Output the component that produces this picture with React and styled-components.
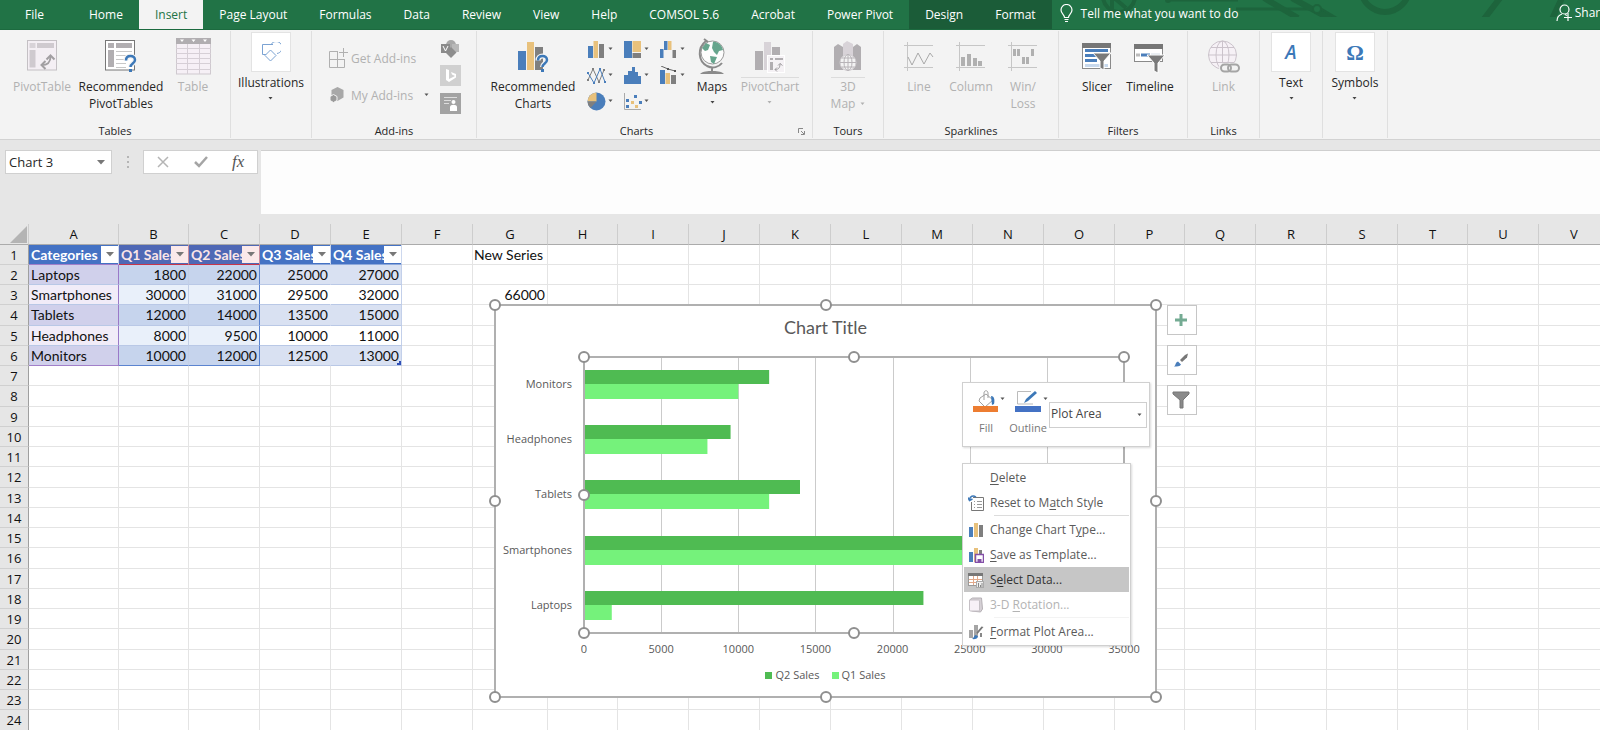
import styled, { createGlobalStyle } from "styled-components";

const uiFont = `"Open Sans", "Noto Sans", sans-serif`;
const cellFont = `Lato, "Open Sans", sans-serif`;

const GlobalStyle = createGlobalStyle`
    * {
        box-sizing: border-box;
    }
    body {
        margin: 0;
        font-family: ${uiFont};
        font-size: 12px;
        color: #262626;
    }
    button, input, textarea, select {
        font: inherit;
        color: inherit;
        background: none;
        border: 0;
        padding: 0;
        margin: 0;
    }
    svg {
        display: block;
        flex: none;
    }
`;

const StyledApp = styled.div`
    display: flex;
    flex-direction: column;
    height: 100vh;
    overflow: hidden;
    background: #e6e6e6;
`;

export default function App(){
    return (
        <StyledApp>
            <GlobalStyle />
            <TabBar />
            <Ribbon />
            <FormulaBar />
            <Sheet />
        </StyledApp>
    );
}

/* ---------- icons ---------- */

const blue = "#4a7ebb";
const sand = "#e8c17c";
const gray = "#7f7f7f";
const pale = "#b1aeb1";
const paler = "#d8d3d8";

function Icon({ w, h, children }){
    return <svg width={w} height={h} viewBox={`0 0 ${w} ${h}`} fill="none" aria-hidden="true">{children}</svg>;
}

function Caret({ color = "#555" }){
    return <Icon w={5} h={4}><path d="M0.5 0.5h4L2.5 3z" fill={color} /></Icon>;
}

function PivotTableIcon(){
    return (
        <Icon w={32} h={36}>
            <rect x="1.5" y="2.5" width="29" height="29.5" fill="#f4eff4" stroke="#c4c0c4" />
            <rect x="3.5" y="5" width="6" height="5" fill={paler} />
            <rect x="11" y="5" width="17" height="5" fill="#cfcacf" />
            <rect x="3.5" y="12" width="6" height="17.5" fill="#cfcacf" />
            <path d="M15.5 27c6 0 9-2 9-9" stroke="#a29fa2" strokeWidth="2" />
            <path d="M19.5 23l-4 4 4 4M20.500 21.500l4-4 4 4" stroke="#a29fa2" strokeWidth="2" />
        </Icon>
    );
}

function Question(){
    return (
        <g>
            <path d="M22 22.5c0-3 2-4.500 4.500-4.500s4.500 1.500 4.500 4c0 3.500-4.500 3.500-4.500 7" stroke="#f3f3f3" strokeWidth="5" />
            <path d="M22 22.500c0-3 2-4.500 4.500-4.500s4.500 1.500 4.500 4c0 3.500-4.500 3.500-4.500 7" stroke="#3c78b8" strokeWidth="2.500" />
            <rect x="25" y="31" width="3" height="3" fill="#3c78b8" />
        </g>
    );
}

function RecommendedPivotIcon(){
    return (
        <Icon w={34} h={36}>
            <rect x="1.500" y="2.500" width="29" height="29.500" fill="#fff" stroke="#777" />
            <rect x="4" y="5" width="6" height="5" fill={pale} />
            <rect x="12" y="5" width="16" height="5" fill={pale} />
            <rect x="4" y="12" width="6" height="17" fill={pale} />
            <path d="M12 13.500h16M12 17.500h16M12 21.500h10M12 25.500h10M12 29.500h10" stroke="#c8c8c8" />
            <Question />
        </Icon>
    );
}

function TableIcon(){
    return (
        <Icon w={35} h={37}>
            <rect x="0.500" y="0.500" width="34" height="35.500" fill="#f6f0f6" stroke="#cfc9cf" />
            <rect width="35" height="6" fill={pale} />
            <path d="M4 1.500h4l-2 2.500zM15.500 1.500h4l-2 2.500zM27 1.500h4l-2 2.500z" fill="#fff" />
            <path d="M0 10.500h35M0 15.500h35M0 20.500h35M0 25.500h35M0 31.500h35M11.500 6v30M23.500 6v30" stroke="#d6cfd6" />
        </Icon>
    );
}

function ShapesIcon(){
    return (
        <Icon w={20} h={20}>
            <path d="M6 12.500H1.500v-10H12" stroke="#7ba3d3" />
            <path d="M10 2.500a6 6 0 1 1 6 9" stroke="#7ba3d3" />
            <path d="M9.500 8l5.500 5.500-5.500 5.500L4 13.500z" fill="#fff" stroke="#7ba3d3" />
        </Icon>
    );
}

function GetAddinsIcon(){
    return (
        <Icon w={19} h={20}>
            <path d="M9 3.500H0.500v16h15V11M0.500 11.500h15M8.500 3.500v16M14.500 0v9M10 4.500h9" stroke="#b0b0b0" />
        </Icon>
    );
}

function MyAddinsIcon(){
    return (
        <Icon w={19} h={16}>
            <path d="M8.500 0l6 3v7.500l-6 3.500-6-3.500V3z" fill="#a8a8a8" />
            <path d="M4.500 7.500l3.500 2v4l-3.500 2-3.500-2v-4z" fill="#9a9a9a" stroke="#f3f3f3" />
        </Icon>
    );
}

function VisioIcon(){
    return (
        <Icon w={21} h={18}>
            <circle cx="11" cy="5" r="5" fill="#a8a8a8" />
            <rect x="12" y="4" width="7" height="8" fill="#b8b8b8" />
            <path d="M11 7l5.500 5.500L11 18l-5.500-5.500z" fill="#8d8d8d" />
            <rect x="1" y="4" width="9" height="9" fill="#8a8a8a" />
            <path d="M3 6l2.500 5L8 6" stroke="#fff" />
        </Icon>
    );
}

function BingIcon(){
    return (
        <Icon w={21} h={21}>
            <rect width="21" height="21" fill="#d0d0d0" />
            <path d="M6 4l3 1v9l6-3-3-1.500L11 7l5 2v3.500L9 17l-3-2z" fill="#fff" />
        </Icon>
    );
}

function PeopleIcon(){
    return (
        <Icon w={21} h={21}>
            <rect width="21" height="21" fill="#a3a3a3" />
            <path d="M4 4.500h13M4 7.500h7M4 10.500h5" stroke="#ddd" />
            <circle cx="13.500" cy="9" r="2" fill="#fff" />
            <path d="M10 18v-4c0-3 7-3 7 0v4z" fill="#fff" />
        </Icon>
    );
}

function RecommendedChartsIcon(){
    return (
        <Icon w={34} h={36}>
            <rect x="2" y="13" width="8" height="19" fill={blue} />
            <rect x="11" y="4" width="7" height="28" fill={sand} />
            <rect x="19" y="9" width="8" height="23" fill={gray} />
            <Question />
        </Icon>
    );
}

const miniCharts = [
    { name: "Column chart", art: <><path d="M1 6h5v12H1z" fill={blue} /><path d="M6.500 1H11v17H6.500z" fill={sand} /><path d="M12 4h5v14h-5z" fill={gray} /></> },
    { name: "Hierarchy chart", art: <><path d="M1 1h8v17H1z" fill={blue} /><path d="M9.500 1H18v11H9.500z" fill={sand} /><path d="M9.500 13H18v5H9.500z" fill={gray} /></> },
    { name: "Waterfall chart", art: <><path d="M1 9h3.500v9H1zM5 1h3.500v9H5z" fill={blue} /><path d="M9 1h3.500v9H9z" fill={sand} /><path d="M13.500 10H17v8h-3.500z" fill={gray} /></> },
    { name: "Line chart", art: <><path d="M1 14l5-11 6 13 5-12" stroke={gray} /><path d="M1 7l6 10 6-14 5 13" stroke={blue} /><path d="M0 6h2v2H0zM6 16h2v2H6zM12 2h2v2h-2zM17 15h2v2h-2z" fill={blue} /><path d="M0 13h2v2H0zM5 2h2v2H5zM11 15h2v2h-2zM16 3h2v2h-2z" fill={gray} /></> },
    { name: "Statistic chart", art: <path d="M1 9h4V5h4V1h3v5h3v4h3v8H1z" fill={blue} /> },
    { name: "Combo chart", art: <><path d="M1 4h5v14H1z" fill={blue} /><path d="M6.500 7H11v11H6.500z" fill={sand} /><path d="M12 9h5v9h-5z" fill={gray} /><path d="M2 0l7 3 7 2" stroke="#666" /><path d="M8 2h2v2H8zM15 4h2v2h-2z" fill="#555" /></> },
    { name: "Pie chart", art: <><circle cx="9.500" cy="9.500" r="9" fill={blue} /><path d="M9.500 9.500V0.500a9 9 0 0 0-9 9z" fill={sand} /><path d="M9.500 9.500h-9a9 9 0 0 0 3 6.500z" fill={gray} /></> },
    { name: "Scatter chart", art: <><path d="M1.500 1v16.500H18" stroke="#aaa" /><path d="M11 3h3v3h-3zM3 7h3v3H3zM3 13h3v3H3zM16 9h3v3h-3z" fill={blue} /><path d="M8 9h3v3H8zM12 13h3v3h-3z" fill={sand} /></> },
];

function MapsIcon(){
    return (
        <Icon w={28} h={37}>
            <circle cx="14.500" cy="14.500" r="11.500" fill="#fdfdfd" stroke="#999" />
            <path d="M15 4c4-1 9 3 10 8l-4 1-2 4-3-3-2-4z" fill="#66a58d" />
            <path d="M4 10l4-5 4 2-2 5-3 1zM12 18l7 1-3 7-3-2z" fill="#66a58d" />
            <path d="M6 1l4 3M8 3C-1 10 0 23 9 28c6 3 12 1 15-3M14 29v5" stroke="#8a8a8a" strokeWidth="2" />
            <path d="M2 36c3-3 8-3 12-3s9 0 12 3z" fill="#8a8a8a" />
        </Icon>
    );
}

function PivotChartIcon(){
    return (
        <Icon w={34} h={36}>
            <rect x="2" y="13" width="8" height="19" fill={pale} />
            <rect x="11" y="4" width="7" height="28" fill={paler} />
            <rect x="19" y="9" width="8" height="23" fill={pale} />
            <rect x="14.500" y="17.500" width="17" height="17" fill="#f5f2f5" stroke="#fff" />
            <path d="M17 20h3v2h-3zM22 20h8v2h-8zM17 24h3v8h-3z" fill={pale} />
            <path d="M22 31.500c4 0 5-2 5-6M22 31.500l2-2M22 31.500l2 2M27 25.500l-2 2M27 25.500l2.500 2" stroke="#a09da0" />
        </Icon>
    );
}

function MapTourIcon(){
    return (
        <Icon w={30} h={36}>
            <path d="M1 9l4-3 5 3v23L1 32z" fill={pale} />
            <path d="M10 6l4-3 6 3v26H10z" fill={paler} />
            <path d="M20 9l4-3 4 3v23h-8z" fill={pale} />
            <circle cx="15" cy="24.500" r="8" fill="#f3f3f3" stroke="#d0ccd0" />
            <path d="M7 24.500h16M9 20h12M9 29h12M15 16.500v16" stroke="#b8b4b8" />
            <ellipse cx="15" cy="24.500" rx="4" ry="8" stroke="#b8b4b8" />
        </Icon>
    );
}

function SparkIcon({ kind }){
    return (
        <Icon w={30} h={36}>
            <path d="M0 7.500h29M0 29.500h29M3.500 4v29" stroke="#c6c6c6" />
            {kind === "line" && <path d="M4 19l4 8 6-12 6 11 6-11 3 4" stroke="#a8a8a8" />}
            {kind === "column" && <path d="M5 19h4v9H5zM11 16h4v12h-4zM17 20h4v8h-4zM22 23h4v5h-4z" fill="#b0b0b0" />}
            {kind === "winloss" && <path d="M5 11h3v7H5zM9 11h3v7H9zM14 19h3v7h-3zM18 19h3v7h-3zM23 11h3v7h-3z" fill="#b0b0b0" />}
        </Icon>
    );
}

function SlicerIcon(){
    return (
        <Icon w={30} h={36}>
            <rect x="0.500" y="5.500" width="28" height="25" fill="#fff" stroke="#8a8a8a" />
            <rect y="5" width="29" height="5" fill="#767676" />
            <path d="M3 12.500h23M3 17.500h14M3 22.500h12" stroke={blue} strokeWidth="3" />
            <path d="M3 27.500h23" stroke="#c7d8ec" strokeWidth="3" />
            <path d="M11 15h18l-7 8v9l-4-2v-7z" fill="#7a7a7a" stroke="#fff" />
        </Icon>
    );
}

function TimelineIcon(){
    return (
        <Icon w={32} h={36}>
            <rect x="0.500" y="6.500" width="28" height="17" fill="#fff" stroke="#8a8a8a" />
            <rect y="6" width="29" height="5" fill="#767676" />
            <path d="M2 17h4" stroke="#bbb" strokeWidth="3" />
            <path d="M7 17h9" stroke={blue} strokeWidth="3" />
            <path d="M17 17h9" stroke="#d5dde6" strokeWidth="3" />
            <path d="M13 17h18l-7 8v10l-4-2v-8z" fill="#7a7a7a" stroke="#fff" />
        </Icon>
    );
}

function LinkIcon(){
    return (
        <Icon w={34} h={36}>
            <g stroke="#cbc3cb">
                <circle cx="15.500" cy="17" r="14" fill="#f6f1f6" />
                <ellipse cx="15.500" cy="17" rx="6.500" ry="14" />
                <path d="M15.500 3v28M1.500 17h28M4 9.500h23M4 24.500h23" />
            </g>
            <rect x="12" y="25" width="22" height="10" rx="5" fill="#f3f3f3" />
            <g stroke="#a5a5a5" strokeWidth="2">
                <rect x="14" y="26.500" width="10" height="7" rx="3.500" />
                <rect x="21" y="26.500" width="11" height="7" rx="3.500" />
            </g>
        </Icon>
    );
}

/* ---------- tabs ---------- */

const StyledTabBar = styled.nav`
    position: relative;
    display: flex;
    flex: none;
    height: 30px;
    overflow: hidden;
    background: #217346;
    color: #fff;
    border-bottom: 1px solid #1c6a3f;

    .circuit {
        position: absolute;
        right: 0;
        top: 0;
    }
`;

const Tab = styled.button`
    flex: none;
    height: 30px;
    padding: 0 16px 2px;
    white-space: nowrap;
    background: ${(p) => (p.$active ? "#f3f3f3" : p.$context ? "#1b5c38" : "transparent")};
    color: ${(p) => (p.$active ? "#217346" : "#fff")};

    &:first-of-type {
        padding: 0 29px 2px 25px;
    }
`;

const TellMe = styled.button`
    position: relative;
    display: flex;
    align-items: center;
    gap: 8px;
    flex: 1;
    padding: 0 0 2px 8px;
    white-space: nowrap;
`;

const Share = styled.button`
    position: relative;
    display: flex;
    align-items: center;
    gap: 3px;
    padding-bottom: 4px;
    margin-right: -7px;
`;

const tabs = ["File", "Home", "Insert", "Page Layout", "Formulas", "Data", "Review", "View", "Help", "COMSOL 5.6", "Acrobat", "Power Pivot"];

function TabBar(){
    return (
        <StyledTabBar>
            <svg className="circuit" width="500" height="17" viewBox="0 0 500 17" fill="none" stroke="#1d643c" strokeWidth="4" aria-hidden="true">
                <circle cx="19" cy="-4" r="16" />
                <path d="M12 10V-4L26 8" />
                <circle cx="68" cy="0" r="3" fill="#1d643c" stroke="none" />
                <path d="M68 0h70M136 9h75M221 9l20 12" strokeWidth="3" />
                <path d="M164-2l34 20M192-2l40 22" strokeWidth="6" />
                <circle cx="217" cy="9" r="4" strokeWidth="2" fill="#217346" />
                <circle cx="285" cy="-12" r="24" strokeWidth="6" />
                <path d="M400-2l-16 21M462-2l-10 21" strokeWidth="6" />
            </svg>
            {tabs.map((name) => <Tab key={name} $active={name === "Insert"}>{name}</Tab>)}
            <Tab $context>Design</Tab>
            <Tab $context>Format</Tab>
            <TellMe>
                <Icon w={13} h={19}>
                    <path d="M4.500 13.500c0-3-3.500-4-3.500-7.500a5.500 5.500 0 0 1 11 0c0 3.500-3.500 4.500-3.500 7.500zM4.500 15.500h4M5 17.500h3" stroke="#fff" strokeWidth="1.200" />
                </Icon>
                Tell me what you want to do
            </TellMe>
            <Share>
                <Icon w={16} h={18}>
                    <circle cx="8.500" cy="5.500" r="4.500" stroke="#fff" strokeWidth="1.200" />
                    <path d="M1 17c0-4 2-6 5-7M9 10.500l2 1M12 9v8M8 13.500h8" stroke="#fff" strokeWidth="1.200" />
                </Icon>
                Share
            </Share>
        </StyledTabBar>
    );
}

/* ---------- ribbon ---------- */

const StyledRibbon = styled.div`
    display: flex;
    flex: none;
    height: 110px;
    background: #f3f3f3;
    border-bottom: 1px solid #d2d2d2;
    overflow: hidden;
`;

const StyledGroup = styled.section`
    display: flex;
    flex-direction: column;
    flex: none;
    width: ${(p) => p.$width}px;
    margin: 1px 0;
    border-right: 1px solid #dfdfdf;

    .body {
        display: flex;
        flex: 1;
        padding-left: ${(p) => p.$inset || 0}px;
    }
    .label {
        display: flex;
        justify-content: center;
        position: relative;
        height: 17px;
        padding-right: ${(p) => (p.$launcher ? 16 : 0)}px;
        line-height: 19px;
        font-size: 11px;
    }
    .launcher {
        position: absolute;
        right: 7px;
        top: 7px;
    }
`;

const BigButton = styled.button`
    display: flex;
    flex-direction: column;
    align-items: center;
    flex: none;
    width: ${(p) => (p.$width ? `${p.$width}px` : "100%")};
    padding-top: ${(p) => (p.$tile ? 1 : 7)}px;
    line-height: 17px;
    white-space: nowrap;
    color: ${(p) => (p.$off ? "#b1b1b1" : "#262626")};

    .art {
        display: flex;
        align-items: center;
        justify-content: center;
        height: ${(p) => (p.$tile ? 40 : 36)}px;
        min-width: ${(p) => (p.$tile ? 40 : 0)}px;
        margin-bottom: ${(p) => (p.$tile ? 2 : 4)}px;
        background: ${(p) => (p.$tile ? "#fff" : "none")};
        border: ${(p) => (p.$tile ? "1px solid #e3e3e3" : "0")};
        color: #3c78b8;
    }
    .words {
        border-top: 1px solid ${(p) => (p.$ruled ? "#dcdcdc" : "transparent")};
        margin-top: -1px;
    }
    .line {
        display: flex;
        align-items: center;
        justify-content: center;
        gap: 5px;
    }
    .glyph {
        font-family: "Liberation Serif", serif;
        font-weight: bold;
        font-size: 22px;
    }
    .slant {
        font-family: ${uiFont};
        font-style: italic;
        font-weight: 600;
        font-size: 19px;
    }
`;

const AddinsList = styled.div`
    display: flex;
    flex-direction: column;
    gap: 17px;
    width: 111px;
    padding-top: 17px;
    color: #b1b1b1;

    button {
        display: flex;
        align-items: center;
        gap: 3px;
        height: 20px;
        white-space: nowrap;
    }
    button svg:last-child {
        margin-left: 8px;
    }
`;

const IconStack = styled.div`
    display: flex;
    flex-direction: column;
    gap: 7px;
    padding-top: 9px;
`;

const ChartGrid = styled.div`
    display: grid;
    grid-template-columns: repeat(3, 36px);
    grid-auto-rows: 26px;
    margin-left: 8px;
    padding-top: 5px;

    button {
        display: flex;
        align-items: center;
        gap: 2px;
    }
`;

function Group({ name, width, inset, launcher, children }){
    return (
        <StyledGroup $width={width} $inset={inset} $launcher={launcher}>
            <div className="body">{children}</div>
            <div className="label">
                {name}
                {launcher && (
                    <button className="launcher" aria-label="See all charts">
                        <Icon w={7} h={7}><path d="M0.500 5V0.500H5M3 3l3 3M6.500 3v3.500H3" stroke="#888" /></Icon>
                    </button>
                )}
            </div>
        </StyledGroup>
    );
}

function Big({ icon, lines, caret, ...rest }){
    return (
        <BigButton {...rest}>
            <span className="art">{icon}</span>
            <span className="words">
                {lines.map((line, i) => (
                    <span className="line" key={line}>
                        {line}
                        {caret === "inline" && i === lines.length - 1 && <Caret color="#b1b1b1" />}
                    </span>
                ))}
                {caret === "below" && <span className="line"><Icon w={5} h={14}><path d="M0.500 6h4L2.500 8.500z" fill={rest.$off ? "#b1b1b1" : "#444"} /></Icon></span>}
            </span>
        </BigButton>
    );
}

function Ribbon(){
    return (
        <StyledRibbon>
            <Group name="Tables" width={231} inset={4}>
                <Big icon={<PivotTableIcon />} lines={["PivotTable"]} $width={76} $off />
                <Big icon={<RecommendedPivotIcon />} lines={["Recommended", "PivotTables"]} $width={82} />
                <Big icon={<TableIcon />} lines={["Table"]} $width={62} $off />
            </Group>
            <Group width={81}>
                <Big icon={<ShapesIcon />} lines={["Illustrations"]} caret="below" $tile />
            </Group>
            <Group name="Add-ins" width={165} inset={17}>
                <AddinsList>
                    <button><GetAddinsIcon /><span>Get Add-ins</span></button>
                    <button><MyAddinsIcon /><span>My Add-ins</span><Caret /></button>
                </AddinsList>
                <IconStack>
                    <VisioIcon />
                    <BingIcon />
                    <PeopleIcon />
                </IconStack>
            </Group>
            <Group name="Charts" width={336} inset={10} launcher>
                <Big icon={<RecommendedChartsIcon />} lines={["Recommended", "Charts"]} $width={92} />
                <ChartGrid>
                    {miniCharts.map((c) => (
                        <button key={c.name} aria-label={c.name}><Icon w={19} h={19}>{c.art}</Icon><Caret /></button>
                    ))}
                </ChartGrid>
                <Big icon={<MapsIcon />} lines={["Maps"]} caret="below" $width={34} />
                <Big icon={<PivotChartIcon />} lines={["PivotChart"]} caret="below" $width={82} $off $ruled />
            </Group>
            <Group name="Tours" width={71}>
                <Big icon={<MapTourIcon />} lines={["3D", "Map"]} caret="inline" $off $ruled />
            </Group>
            <Group name="Sparklines" width={175} inset={9}>
                <Big icon={<SparkIcon kind="line" />} lines={["Line"]} $width={52} $off />
                <Big icon={<SparkIcon kind="column" />} lines={["Column"]} $width={52} $off />
                <Big icon={<SparkIcon kind="winloss" />} lines={["Win/", "Loss"]} $width={52} $off />
            </Group>
            <Group name="Filters" width={129} inset={12}>
                <Big icon={<SlicerIcon />} lines={["Slicer"]} $width={52} />
                <Big icon={<TimelineIcon />} lines={["Timeline"]} $width={54} />
            </Group>
            <Group name="Links" width={72}>
                <Big icon={<LinkIcon />} lines={["Link"]} $off />
            </Group>
            <Group width={63}>
                <Big icon={<span className="glyph slant">A</span>} lines={["Text"]} caret="below" $tile />
            </Group>
            <Group width={65}>
                <Big icon={<span className="glyph">Ω</span>} lines={["Symbols"]} caret="below" $tile />
            </Group>
        </StyledRibbon>
    );
}

/* ---------- formula bar ---------- */

const StyledFormulaBar = styled.div`
    display: flex;
    flex: none;
    align-items: flex-start;
    height: 84px;
    padding: 10px 0 0 5px;

    textarea {
        flex: 1;
        height: 64px;
        margin-left: 3px;
        background: #fdfdfd;
        border-top: 1px solid #cfcfcf;
        resize: none;
    }
`;

const NameBox = styled.div`
    display: flex;
    align-items: center;
    width: 107px;
    height: 24px;
    padding: 0 6px 0 3px;
    background: #fff;
    border: 1px solid #d0d0d0;

    input {
        flex: 1;
        min-width: 0;
        font-size: 13px;
    }
`;

const Grip = styled.span`
    display: flex;
    justify-content: center;
    align-items: center;
    width: 31px;
    height: 24px;
`;

const EditButtons = styled.div`
    display: flex;
    width: 115px;
    height: 24px;
    background: #fff;
    border: 1px solid #d0d0d0;

    button {
        display: flex;
        align-items: center;
        justify-content: center;
        flex: 1;
        font: italic 17px "Liberation Serif", serif;
        color: #555;
    }
`;

function FormulaBar(){
    return (
        <StyledFormulaBar>
            <NameBox>
                <input aria-label="Name box" defaultValue="Chart 3" />
                <button aria-label="Open name list"><Icon w={8} h={5}><path d="M0 0h8L4 4.500z" fill="#777" /></Icon></button>
            </NameBox>
            <Grip><Icon w={2} h={12}><path d="M0 0h2v2H0zM0 5h2v2H0zM0 10h2v2H0z" fill="#b5b5b5" /></Icon></Grip>
            <EditButtons>
                <button aria-label="Cancel"><Icon w={12} h={12}><path d="M1 1l10 10M11 1L1 11" stroke="#b5b5b5" strokeWidth="1.500" /></Icon></button>
                <button aria-label="Enter"><Icon w={14} h={12}><path d="M1 6l4 4 8-9" stroke="#a5a5a5" strokeWidth="2.500" /></Icon></button>
                <button aria-label="Insert function">fx</button>
            </EditButtons>
            <textarea aria-label="Formula" />
        </StyledFormulaBar>
    );
}

/* ---------- sheet ---------- */

const columns = "ABCDEFGHIJKLMNOPQRSTUV".split("");
const columnWidths = { A: 90, B: 70, G: 75, H: 70, P: 70, T: 70 };
const rowNumbers = Array.from({ length: 24 }, (_, i) => i + 1);

const headers = ["Categories", "Q1 Sales", "Q2 Sales", "Q3 Sales", "Q4 Sales"];
const sales = [
    ["Laptops", 1800, 22000, 25000, 27000],
    ["Smartphones", 30000, 31000, 29500, 32000],
    ["Tablets", 12000, 14000, 13500, 15000],
    ["Headphones", 8000, 9500, 10000, 11000],
    ["Monitors", 10000, 12000, 12500, 13000],
];

const StyledSheet = styled.main`
    position: relative;
    flex: 1;
    min-height: 0;
    overflow: hidden;
    background: #fff;
`;

const Grid = styled.table`
    table-layout: fixed;
    border-spacing: 0;
    width: 0;
    font-family: ${cellFont};
    font-size: 14px;
    line-height: 18px;
    color: #111;

    th, td {
        padding: 0;
        overflow: hidden;
        white-space: nowrap;
        border-right: 1px solid #e4e4e4;
        border-bottom: 1px solid #e4e4e4;
    }
    thead th {
        height: 21px;
        background: #e6e6e6;
        font-family: ${uiFont};
        font-size: 13px;
        font-weight: normal;
        border-right-color: #cdcdcd;
        border-bottom-color: #ababab;
    }
    tbody th {
        background: #e6e6e6;
        font-family: ${uiFont};
        font-size: 13px;
        font-weight: normal;
        border-right-color: #9f9f9f;
        border-bottom-color: #d0d0d0;
    }
    thead th:first-child svg {
        margin-left: 10px;
    }
`;

const Row = styled.tr`
    height: ${(p) => (p.$tall ? 21 : 20)}px;
`;

const tint = {
    name: ["#d0d0eb", "#f1ecf8"],
    picked: ["#c6d4ed", "#e9f0fa"],
    plain: ["#d9e1f2", "#fff"],
};

const Cell = styled.td`
    && {
        position: relative;
        background: ${(p) => tint[p.$tint][p.$band ? 0 : 1]};
        text-align: ${(p) => (p.$tint === "name" ? "left" : "right")};
        padding: 0 2px;
        border-bottom-color: ${(p) => (p.$last && p.$tint === "name" ? "#a17fc9" : p.$last && p.$tint === "picked" ? "#5b84d0" : "#b9c8e6")};
        border-right-color: ${(p) => p.$edge || "transparent"};
    }
`;

const HeadCell = styled.td`
    && {
        background: ${(p) => (p.$picked ? "#4f68b5" : "#4472c4")};
        border-bottom-color: ${(p) => (p.$picked ? "#c8354a" : p.$name ? "#a17fc9" : "#8ea9db")};
        border-right-color: ${(p) => (p.$picked ? "#c98d9c" : "#cdd8ee")};
    }
    div {
        display: flex;
        align-items: center;
        height: 19px;
        padding-left: 2px;
    }
    span {
        flex: 1;
        overflow: hidden;
        font-weight: bold;
        color: ${(p) => (p.$picked ? "#fbe5e8" : "#fff")};
    }
    button {
        display: flex;
        align-items: center;
        justify-content: center;
        flex: none;
        width: 17px;
        height: 17px;
        background: ${(p) => (p.$picked ? "#fbe9ea" : "#fff")};
    }
`;

const TableCorner = styled.i`
    position: absolute;
    right: 0;
    bottom: 0;
    width: 4px;
    height: 4px;
    border-right: 2px solid #2f4fb5;
    border-bottom: 2px solid #2f4fb5;
`;

const NumberCell = styled.td`
    && {
        text-align: right;
        padding-right: 2px;
    }
`;

const TextCell = styled.td`
    && {
        padding-left: 1px;
    }
`;

function SheetCell({ row, col }){
    const index = columns.indexOf(col);
    if (row === 1 && index < 5) {
        return (
            <HeadCell $picked={col === "B" || col === "C"} $name={col === "A"}>
                <div>
                    <span>{headers[index]}</span>
                    <button aria-label={`Filter ${headers[index]}`}><Icon w={8} h={5}><path d="M0 0h8L4 4.500z" fill="#777" /></Icon></button>
                </div>
            </HeadCell>
        );
    }
    if (row > 1 && row < 7 && index < 5) {
        return (
            <Cell
                $tint={col === "A" ? "name" : col < "D" ? "picked" : "plain"}
                $band={row % 2 === 0}
                $last={row === 6}
                $edge={{ A: "#9a78c8", B: "#c3cfe6", C: "#5b84d0", E: "#c3d0ea" }[col]}
            >
                {sales[row - 2][index]}
                {row === 6 && col === "E" && <TableCorner />}
            </Cell>
        );
    }
    if (col === "G" && row === 1) return <TextCell>New Series</TextCell>;
    if (col === "G" && row === 3) return <NumberCell>66000</NumberCell>;
    return <td />;
}

function Sheet(){
    return (
        <StyledSheet>
            <Grid>
                <colgroup>
                    <col width={29} />
                    {columns.map((c) => <col key={c} width={columnWidths[c] || 71} />)}
                </colgroup>
                <thead>
                    <tr>
                        <th aria-label="Select all"><Icon w={17} h={17}><path d="M17 0v17H0z" fill="#b4b4b4" /></Icon></th>
                        {columns.map((c) => <th key={c} scope="col">{c}</th>)}
                    </tr>
                </thead>
                <tbody>
                    {rowNumbers.map((n) => (
                        <Row key={n} $tall={n % 4 === 0}>
                            <th scope="row">{n}</th>
                            {columns.map((c) => <SheetCell key={c} row={n} col={c} />)}
                        </Row>
                    ))}
                </tbody>
            </Grid>
            <Chart />
            <ChartTools />
            <MiniToolbar />
            <ContextMenu />
        </StyledSheet>
    );
}

/* ---------- chart ---------- */

const StyledChart = styled.figure`
    position: absolute;
    left: 494px;
    top: 80px;
    display: flex;
    flex-direction: column;
    width: 663px;
    height: 394px;
    margin: 0;
    background: #fff;
    border: 2px solid #b0b0b0;
    font-size: 11px;
    color: #595959;

    h2 {
        margin: 9px 0 2px;
        text-align: center;
        font-family: ${cellFont};
        font-size: 18px;
        line-height: 24px;
        font-weight: normal;
    }
    text {
        font-size: 11px;
        fill: #595959;
    }
`;

const Legend = styled.figcaption`
    display: flex;
    justify-content: center;
    gap: 12px;
    margin-top: 12px;
    line-height: 16px;

    span {
        display: flex;
        align-items: center;
        gap: 3px;
    }
`;

const Swatch = styled.i`
    width: 7px;
    height: 7px;
    background: ${(p) => p.$color};
`;

/* centred on the middle of the 2px frame line */
const Handle = styled.i`
    position: absolute;
    left: calc((100% + 2px) * ${(p) => p.$x / 100} - 1px);
    top: calc((100% + 2px) * ${(p) => p.$y / 100} - 1px);
    width: 12px;
    height: 12px;
    margin: -6px;
    background: #fff;
    border: 2px solid #8f8f8f;
    border-radius: 50%;
`;

const handleSpots = [[0, 0], [50, 0], [100, 0], [0, 50], [100, 50], [0, 100], [50, 100], [100, 100]];
const dark = "#4fbb52";
const light = "#75f27b";

function Plot(){
    const left = 88;
    const top = 16;
    const width = 540;
    const height = 276;
    const band = height / 5;
    const scale = (v) => (v / 35000) * width;
    const ticks = [0, 5000, 10000, 15000, 20000, 25000, 30000, 35000];
    const rows = [...sales].reverse();
    return (
        <svg width="659" height="314" viewBox="0 0 659 314" role="img" aria-label="Sales by category">
            {ticks.map((t) => (
                <g key={t}>
                    <rect x={Math.round(left + scale(t))} y={top} width="1" height={height} fill="#cbcbcb" />
                    <text x={left + scale(t)} y={top + height + 20} textAnchor="middle">{t}</text>
                </g>
            ))}
            {rows.map(([name, q1, q2], i) => (
                <g key={name}>
                    <rect x={left} y={Math.round(top + 13 + i * band)} width={scale(q2)} height="14" fill={dark} />
                    <rect x={left} y={Math.round(top + 27 + i * band)} width={scale(q1)} height="15" fill={light} />
                    <text x={left - 12} y={Math.round(top + 31 + i * band)} textAnchor="end">{name}</text>
                </g>
            ))}
            <rect x={left} y={top} width={width} height={height} fill="none" stroke="#b0b0b0" strokeWidth="2" />
            {handleSpots.filter(([x, y]) => !(x === 100 && y === 50)).map(([x, y]) => (
                <circle key={`${x}-${y}`} cx={left + (width * x) / 100} cy={top + (height * y) / 100} r="5" fill="#fff" stroke="#8f8f8f" strokeWidth="2" />
            ))}
        </svg>
    );
}

function Chart(){
    return (
        <StyledChart>
            <h2>Chart Title</h2>
            <Plot />
            <Legend>
                <span><Swatch $color={dark} />Q2 Sales</span>
                <span><Swatch $color={light} />Q1 Sales</span>
            </Legend>
            {handleSpots.map(([x, y]) => <Handle key={`${x}-${y}`} $x={x} $y={y} />)}
        </StyledChart>
    );
}

const StyledChartTools = styled.div`
    position: absolute;
    left: 1167px;
    top: 81px;
    display: flex;
    flex-direction: column;
    gap: 10px;

    button {
        display: flex;
        align-items: center;
        justify-content: center;
        width: 30px;
        height: 30px;
        padding: 0 2px 1px 0;
        background: #fff;
        border: 1px solid #c6c6c6;
    }
`;

function ChartTools(){
    return (
        <StyledChartTools>
            <button aria-label="Chart elements"><Icon w={12} h={12}><path d="M6 0v12M0 6h12" stroke="#74ab93" strokeWidth="3" /></Icon></button>
            <button aria-label="Chart styles">
                <Icon w={16} h={14}>
                    <path d="M15 0.500l-1 4-5 4.500-2-2 5-5z" fill="#777" />
                    <path d="M1 13.500c2-1 1-4 4-5l3 3c-1 2-4 2-7 2z" fill={blue} />
                </Icon>
            </button>
            <button aria-label="Chart filters"><Icon w={18} h={18}><path d="M1 1h16v2l-6 6v8H8V9L1 3z" fill="#8a8a8a" stroke="#777" /></Icon></button>
        </StyledChartTools>
    );
}

/* ---------- popups ---------- */

const Popup = styled.div`
    position: absolute;
    left: 962px;
    background: #fff;
    border: 1px solid #d0d0d0;
    box-shadow: 1px 1px 2px rgba(0, 0, 0, 0.15);
    color: #555;
`;

const StyledMiniToolbar = styled(Popup)`
    top: 158px;
    display: flex;
    width: 188px;
    height: 65px;
    padding: 7px 2px 0 2px;
`;

const ColorButton = styled.button`
    display: flex;
    flex-direction: column;
    align-items: center;
    width: 42px;
    height: 50px;
    font-size: 11px;
    line-height: 16px;
    color: #777;

    .top {
        display: flex;
        gap: 2px;
        margin: 0 0 8px 6px;
    }
    .top svg:last-child {
        margin-top: 7px;
    }
`;

const PlotSelect = styled.label`
    display: flex;
    align-items: center;
    flex: 1;
    height: 26px;
    margin-top: 12px;
    padding-right: 4px;
    border: 1px solid #cfcfcf;

    select {
        flex: 1;
        appearance: none;
        padding: 0 0 4px 1px;
        color: #444;
    }
`;

function MiniToolbar(){
    return (
        <StyledMiniToolbar role="toolbar" aria-label="Chart formatting">
            <ColorButton>
                <span className="top">
                    <Icon w={25} h={22}>
                        <path d="M7 8l6-4 7 6-8 7-6-6zM11 10V3c0-3 4-3 4 0v5" stroke="#a0a0a0" />
                        <path d="M18 6c3 0 4 3 3 8l-2 1z" fill="#3c78b8" />
                        <rect y="16" width="25" height="6" fill="#ed7d31" />
                    </Icon>
                    <Caret />
                </span>
                Fill
            </ColorButton>
            <ColorButton>
                <span className="top">
                    <Icon w={26} h={22}>
                        <path d="M16 1.500H2.500V14H18" stroke="#bbb" />
                        <path d="M9 13l2-4L20 1l2 2-9 8z" fill="#3c78b8" />
                        <rect y="16" width="26" height="6" fill="#4472c4" />
                    </Icon>
                    <Caret />
                </span>
                Outline
            </ColorButton>
            <PlotSelect>
                <select aria-label="Chart element"><option>Plot Area</option></select>
                <Caret />
            </PlotSelect>
        </StyledMiniToolbar>
    );
}

const StyledMenu = styled(Popup)`
    top: 239px;
    width: 169px;
    padding: 1px;
`;

const MenuItem = styled.button`
    display: flex;
    align-items: center;
    gap: 6px;
    width: 100%;
    height: 25px;
    padding-left: 4px;
    white-space: nowrap;
    background: ${(p) => (p.$hot ? "#c6c6c6" : "none")};
    color: ${(p) => (p.disabled ? "#b3b3b3" : p.$hot ? "#333" : "#5a5a5a")};

    u {
        text-underline-offset: 2px;
    }
`;

const Rule = styled.hr`
    height: 1px;
    margin: 0 0 1px 30px;
    border: 0;
    background: ${(p) => (p.$faint ? "#f3f3f3" : "#dcdcdc")};
`;

const bars = (
    <>
        <path d="M1 5h4v10H1z" fill={blue} />
        <path d="M6 1h4v14H6z" fill={sand} />
    </>
);

function ContextMenu(){
    return (
        <StyledMenu role="menu">
            <MenuItem><Icon w={16} h={16} /><span><u>D</u>elete</span></MenuItem>
            <MenuItem>
                <Icon w={16} h={16}>
                    <path d="M5 2.500h10.500v13h-12V7" stroke="#777" />
                    <path d="M6 6.500h1M9 6.500h5M6 9.500h1M9 9.500h5M6 12.500h1M9 12.500h5" stroke="#999" />
                    <path d="M8 2C5 0 2 1 1.500 5M0 2.500L1.500 5.500 4.500 4" stroke="#3c78b8" strokeWidth="1.500" />
                </Icon>
                <span>Reset to M<u>a</u>tch Style</span>
            </MenuItem>
            <Rule />
            <MenuItem>
                <Icon w={16} h={16}>{bars}<path d="M11 3h4v12h-4z" fill={gray} /></Icon>
                <span>Change Chart T<u>y</u>pe...</span>
            </MenuItem>
            <MenuItem>
                <Icon w={16} h={16}>
                    {bars}
                    <path d="M11 3h3v4h-3z" fill={gray} />
                    <path d="M7.500 7.500h8v8h-8z" fill="#fff" stroke="#8450a8" strokeWidth="1.500" />
                    <path d="M9.500 12h4v3h-4z" fill="#8450a8" />
                </Icon>
                <span><u>S</u>ave as Template...</span>
            </MenuItem>
            <MenuItem $hot>
                <Icon w={16} h={16}>
                    <rect x="0.500" y="1.500" width="14" height="12" fill="#fff" stroke="#999" />
                    <rect y="1" width="15" height="3" fill="#777" />
                    <path d="M1 7.500h13M1 10.500h13M5.500 4v9M9.500 4v9" stroke="#e3a98a" />
                    <rect x="8.500" y="9.500" width="7" height="6" fill="#eee" stroke="#aaa" />
                    <path d="M10.500 11v4M12.500 13v2M14 11v4" stroke="#888" />
                </Icon>
                <span>S<u>e</u>lect Data...</span>
            </MenuItem>
            <MenuItem disabled>
                <Icon w={16} h={16}>
                    <path d="M1.500 3l3-2h9l1 11-2 3-9-1-2-2z" fill="#d5d0d5" stroke="#b5b0b5" />
                    <rect x="1.500" y="3" width="10" height="11" rx="1" fill="#f7f1f7" stroke="#c5c0c5" />
                </Icon>
                <span>3-D <u>R</u>otation...</span>
            </MenuItem>
            <Rule $faint />
            <MenuItem>
                <Icon w={16} h={16}>
                    <path d="M1 6h4v8H1zM6 1h4v12H6z" fill="#a5a5a5" />
                    <path d="M15.500 3l-6 7-1-1.500 5-6z" fill="#777" />
                    <path d="M4 15c2-1 2-4 4-4l2 1.500c0 2-3 3-6 2.500z" fill="#3c78b8" />
                    <path d="M12 9h2v4h-2z" fill="#888" />
                </Icon>
                <span><u>F</u>ormat Plot Area...</span>
            </MenuItem>
        </StyledMenu>
    );
}
